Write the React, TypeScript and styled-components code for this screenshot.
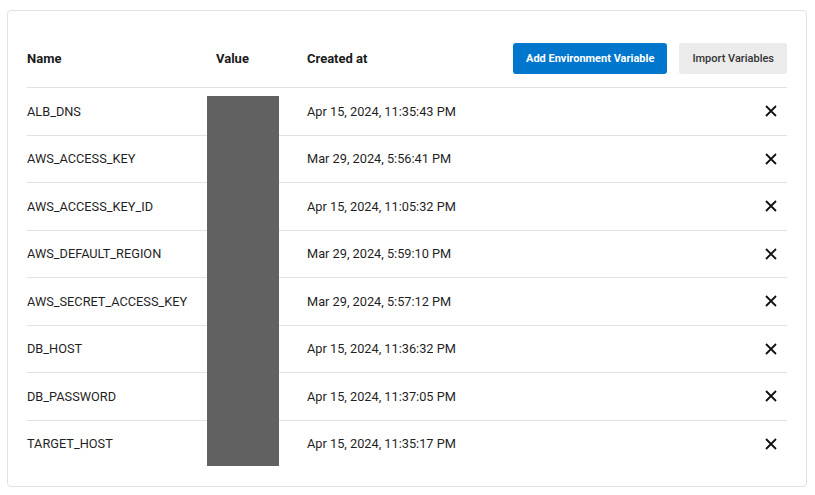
import React from 'react'
import styled, { createGlobalStyle } from 'styled-components'

const GlobalStyle = createGlobalStyle`
  html, body {
    margin: 0;
    padding: 0;
    background: #ffffff;
    font-family: Roboto, "Noto Sans", sans-serif;
    color: #1f1f1f;
  }
`;

const variables = [
  { name: 'ALB_DNS', created: 'Apr 15, 2024, 11:35:43 PM' },
  { name: 'AWS_ACCESS_KEY', created: 'Mar 29, 2024, 5:56:41 PM' },
  { name: 'AWS_ACCESS_KEY_ID', created: 'Apr 15, 2024, 11:05:32 PM' },
  { name: 'AWS_DEFAULT_REGION', created: 'Mar 29, 2024, 5:59:10 PM' },
  { name: 'AWS_SECRET_ACCESS_KEY', created: 'Mar 29, 2024, 5:57:12 PM' },
  { name: 'DB_HOST', created: 'Apr 15, 2024, 11:36:32 PM' },
  { name: 'DB_PASSWORD', created: 'Apr 15, 2024, 11:37:05 PM' },
  { name: 'TARGET_HOST', created: 'Apr 15, 2024, 11:35:17 PM' },
]

const CloseIcon = () => (
  <svg width="12" height="12" viewBox="0 0 12 12" fill="none">
    <path d="M1 1L11 11M11 1L1 11" stroke="#111" strokeWidth="1.8" />
  </svg>
)

const App = () => {
  return (
    <>
      <GlobalStyle />
      <Page>
        <Card>
          <HeaderRow>
            <HeadCell>Name</HeadCell>
            <HeadCell indent>Value</HeadCell>
            <HeadCell>Created at</HeadCell>
            <Actions>
              <PrimaryButton>Add Environment Variable</PrimaryButton>
              <SecondaryButton>Import Variables</SecondaryButton>
            </Actions>
          </HeaderRow>
          <Body>
            {variables.map((v) => (
              <Row key={v.name}>
                <Cell>{v.name}</Cell>
                <Cell />
                <Cell>{v.created}</Cell>
                <DeleteButton aria-label="delete">
                  <CloseIcon />
                </DeleteButton>
              </Row>
            ))}
            <Redacted />
          </Body>
        </Card>
      </Page>
    </>
  )
}

export default App

const Page = styled.div`
  padding: 10px 8px 8px 7px;
`;

const Card = styled.div`
  width: 800px;
  box-sizing: border-box;
  border: 1px solid #e2e2e2;
  border-radius: 4px;
  padding: 18px 19px 19px 19px;
`;

const columns = `180px 100px 1fr auto`;

const HeaderRow = styled.div`
  display: grid;
  grid-template-columns: ${columns};
  align-items: center;
  height: 58px;
  box-sizing: border-box;
`;

const HeadCell = styled.div<{ indent?: boolean }>`
  font-size: 13px;
  font-weight: 700;
  color: #1a1a1a;
  padding-left: ${(p) => (p.indent ? '9px' : '0')};
`;

const Actions = styled.div`
  display: flex;
  gap: 12px;
`;

const PrimaryButton = styled.button`
  height: 31px;
  padding: 0 13px;
  border: none;
  border-radius: 3px;
  background: #0076cc;
  color: #ffffff;
  font-family: Roboto, sans-serif;
  font-size: 11px;
  font-weight: 700;
`;

const SecondaryButton = styled.button`
  height: 31px;
  padding: 0 13px;
  border: none;
  border-radius: 3px;
  background: #ebebeb;
  color: #333333;
  font-family: Roboto, sans-serif;
  font-size: 11px;
  font-weight: 500;
`;

const Body = styled.div`
  position: relative;
`;

const Row = styled.div`
  display: grid;
  grid-template-columns: ${columns};
  align-items: center;
  height: 47.5px;
  box-sizing: border-box;
  border-top: 1px solid #e2e2e2;
`;

const Cell = styled.div`
  font-size: 12.75px;
  color: #1f1f1f;
`;

const DeleteButton = styled.button`
  display: flex;
  align-items: center;
  justify-content: center;
  background: none;
  border: none;
  padding: 0 8px 0 0;
  width: 24px;
  height: 24px;
  cursor: pointer;
`;

const Redacted = styled.div`
  position: absolute;
  left: 180px;
  top: 9px;
  width: 72px;
  height: 370px;
  background: #616161;
`;
